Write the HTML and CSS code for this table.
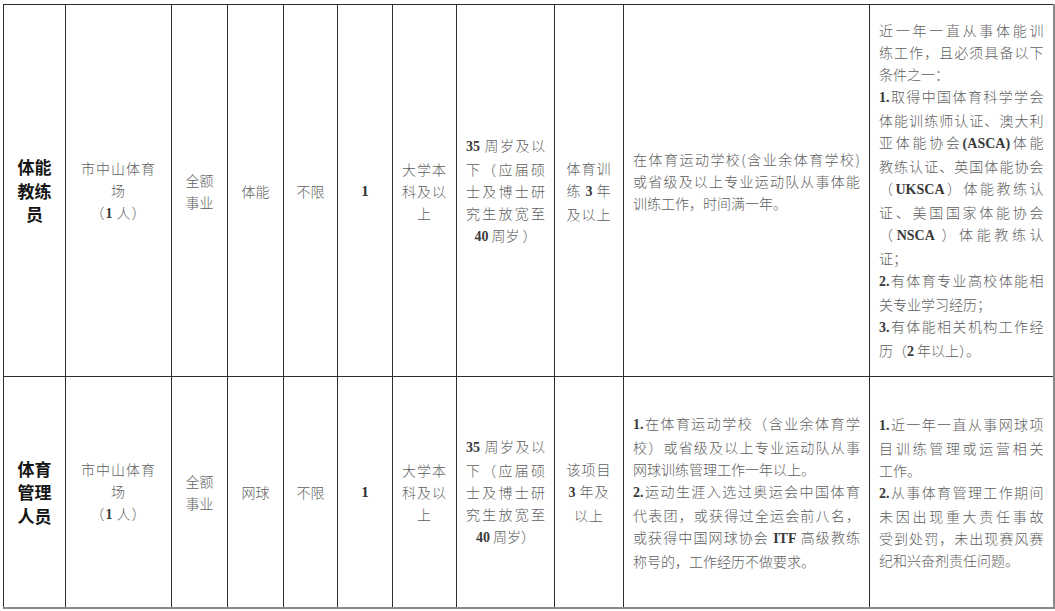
FILE: index.html
```html
<!DOCTYPE html>
<html lang="zh-CN">
<head>
<meta charset="utf-8">
<title>岗位表</title>
<link rel="stylesheet" href="styles.css">
</head>
<body>
<table class="sheet">
  <colgroup>
    <col class="c1"><col class="c2"><col class="c3"><col class="c4"><col class="c5"><col class="c6"><col class="c7"><col class="c8"><col class="c9"><col class="c10"><col class="c11">
  </colgroup>
  <tbody>
    <tr class="r1">
      <td class="head"><span class="ln">体能</span><span class="ln">教练</span><span class="ln">员</span></td>
      <td class="sp"><span class="ln">市中山体育</span><span class="ln">场</span><span class="ln">（<span class="en">1</span> 人）</span></td>
      <td><span class="ln">全额</span><span class="ln">事业</span></td>
      <td><span class="ln">体能</span></td>
      <td><span class="ln">不限</span></td>
      <td><span class="num">1</span></td>
      <td class="sp"><span class="ln">大学本</span><span class="ln">科及以</span><span class="ln">上</span></td>
      <td class="age"><span class="ln j"><span class="en">35</span> 周岁及以</span><span class="ln j">下（应届硕</span><span class="ln j">士及博士研</span><span class="ln j">究生放宽至</span><span class="ln"><span class="en">40</span> 周岁 ）</span></td>
      <td class="sp"><span class="ln">体育训</span><span class="ln">练 <span class="en">3</span> 年</span><span class="ln">及以上</span></td>
      <td class="para up"><span class="ln j">在体育运动学校(含业余体育学校)</span><span class="ln j">或省级及以上专业运动队从事体能</span><span class="ln">训练工作，时间满一年。</span></td>
      <td class="para last"><span class="ln j">近一年一直从事体能训</span><span class="ln j">练工作，且必须具备以下</span><span class="ln">条件之一：</span><span class="ln j"><span class="en">1.</span>取得中国体育科学学会</span><span class="ln j">体能训练师认证、澳大利</span><span class="ln j">亚体能协会<span class="en">(ASCA)</span>体能</span><span class="ln j">教练认证、英国体能协会</span><span class="ln j">（<span class="en">UKSCA</span>）体能教练认</span><span class="ln j">证、美国国家体能协会</span><span class="ln j">（<span class="en">NSCA</span> ）体能教练认</span><span class="ln">证；</span><span class="ln j"><span class="en">2.</span>有体育专业高校体能相</span><span class="ln">关专业学习经历；</span><span class="ln j"><span class="en">3.</span>有体能相关机构工作经</span><span class="ln">历（<span class="en">2</span> 年以上）。</span></td>
    </tr>
    <tr class="r2">
      <td class="head"><span class="ln">体育</span><span class="ln">管理</span><span class="ln">人员</span></td>
      <td class="sp"><span class="ln">市中山体育</span><span class="ln">场</span><span class="ln">（<span class="en">1</span> 人）</span></td>
      <td><span class="ln">全额</span><span class="ln">事业</span></td>
      <td><span class="ln">网球</span></td>
      <td><span class="ln">不限</span></td>
      <td><span class="num">1</span></td>
      <td class="sp"><span class="ln">大学本</span><span class="ln">科及以</span><span class="ln">上</span></td>
      <td class="age"><span class="ln j"><span class="en">35</span> 周岁及以</span><span class="ln j">下（应届硕</span><span class="ln j">士及博士研</span><span class="ln j">究生放宽至</span><span class="ln"><span class="en">40</span> 周岁）</span></td>
      <td class="sp"><span class="ln">该项目</span><span class="ln"><span class="en">3</span> 年及</span><span class="ln">以上</span></td>
      <td class="para"><span class="ln j"><span class="en">1.</span>在体育运动学校（含业余体育学</span><span class="ln j">校）或省级及以上专业运动队从事</span><span class="ln">网球训练管理工作一年以上。</span><span class="ln j"><span class="en">2.</span>运动生涯入选过奥运会中国体育</span><span class="ln j">代表团，或获得过全运会前八名，</span><span class="ln j">或获得中国网球协会 <span class="en">ITF</span> 高级教练</span><span class="ln">称号的，工作经历不做要求。</span></td>
      <td class="para last"><span class="ln j"><span class="en">1.</span>近一年一直从事网球项</span><span class="ln j">目训练管理或运营相关</span><span class="ln">工作。</span><span class="ln j"><span class="en">2.</span>从事体育管理工作期间</span><span class="ln j">未因出现重大责任事故</span><span class="ln j">受到处罚，未出现赛风赛</span><span class="ln">纪和兴奋剂责任问题。</span></td>
    </tr>
  </tbody>
</table>
</body>
</html>
```

FILE: styles.css
```css
html, body {
  margin: 0;
  padding: 0;
  background: #ffffff;
}

body {
  font-family: "Noto Sans CJK SC", "Noto Sans", sans-serif;
  padding: 4px 0 0 3px;
}

.sheet {
  border-collapse: collapse;
  table-layout: fixed;
  width: 1051px;
  border-right: 2px solid #8a8a8a;
  border-bottom: 2px solid #8a8a8a;
}

.c1 { width: 62px; }
.c2 { width: 106px; }
.c3 { width: 56px; }
.c4 { width: 56px; }
.c5 { width: 54px; }
.c6 { width: 55px; }
.c7 { width: 64px; }
.c8 { width: 98px; }
.c9 { width: 69px; }
.c10 { width: 246px; }
.c11 { width: 184px; }

.r1 { height: 372px; }
.r2 { height: 231px; }

.sheet td {
  border: 1px solid #2e2e2e;
  padding: 0 9px;
  vertical-align: middle;
  text-align: center;
  font-size: 14px;
  line-height: 22px;
  font-weight: 300;
  color: #5e5e5e;
  overflow: hidden;
}

.sheet td.last {
  border-left-color: #707070;
  border-right: 2px solid #8a8a8a;
}

.ln {
  display: block;
  white-space: nowrap;
}

.j {
  text-align: justify;
  text-align-last: justify;
}

.sp .ln {
  letter-spacing: 1px;
}

.head {
  font-size: 17px !important;
  line-height: 23.5px !important;
  font-weight: 700 !important;
  color: #151515 !important;
}

.age {
  text-align: center;
}

.para {
  text-align: left !important;
}

.para.up {
  padding-bottom: 20px !important;
}

.en {
  font-family: "Liberation Serif", "Times New Roman", serif;
  font-weight: 700;
  color: #3a3a3a;
  letter-spacing: 0;
}

.num {
  font-family: "Liberation Serif", "Times New Roman", serif;
  font-size: 15px;
  font-weight: 700;
  color: #333333;
}
```
